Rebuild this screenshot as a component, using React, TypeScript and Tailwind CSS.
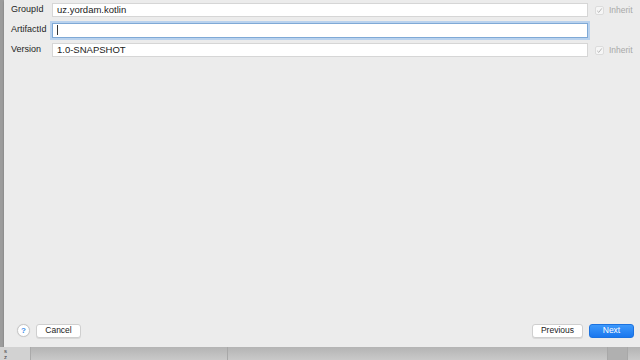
import React from "react";

const font = { fontFamily: '"Helvetica Neue", "Liberation Sans", Arial, sans-serif' };

function Row({ label, value, focused, inherit }: { label: string; value: string; focused?: boolean; inherit?: boolean }) {
  return (
    <div className="flex items-center h-[20px]">
      <div className="w-[48px] pl-[7px] text-[9px] text-[#1e1e1e]">{label}</div>
      <div
        className={
          focused
            ? "w-[536px] h-[15px] bg-white border border-[#7fa9d6] ring-2 ring-[#b9d2ee] flex items-center pl-[4px] text-[9.5px] text-[#222]"
            : "w-[536px] h-[14px] bg-white border border-[#d6d6d6] flex items-center pl-[4px] text-[9.5px] text-[#222]"
        }
      >
        {focused ? <span className="w-px h-[10px] bg-[#333]" /> : value}
      </div>
      {inherit && (
        <div className="flex items-center ml-[7px] gap-[5px] text-[8.5px] text-[#a8a8a8]">
          <span className="w-[9px] h-[9px] border border-[#dcdcdc] rounded-[2px] bg-[#f6f6f6] flex items-center justify-center">
            <svg width="7" height="7" viewBox="0 0 7 7">
              <path d="M1.2 3.8 L2.8 5.4 L5.8 1.4" fill="none" stroke="#b0b0b0" strokeWidth="0.9" />
            </svg>
          </span>
          <span>Inherit</span>
        </div>
      )}
    </div>
  );
}

export default function App() {
  return (
    <div className="w-[640px] h-[360px] bg-[#c6c6c6] relative overflow-hidden flex flex-col" style={font}>
      <div className="flex h-[348px]">
        <div className="w-[4px] bg-[#9c9c9c]" />
        <div className="flex-1 bg-[#ececec] flex flex-col shadow-[0_1px_2px_rgba(0,0,0,0.25)]">
          <div className="flex flex-col">
            <Row label="GroupId" value="uz.yordam.kotlin" inherit />
            <Row label="ArtifactId" value="" focused />
            <Row label="Version" value="1.0-SNAPSHOT" inherit />
          </div>
          <div className="flex-1" />
          <div className="flex items-center h-[15px] mb-[9px] pl-[13px] pr-[6px]">
            <div className="w-[13px] h-[13px] rounded-full bg-white border border-[#c8c8c8] flex items-center justify-center text-[8px] text-[#3d8fe8] font-bold shadow-[0_0_1px_rgba(0,0,0,0.15)]">
              ?
            </div>
            <button className="ml-[6px] w-[45px] h-[14px] bg-white border border-[#cfcfcf] rounded-[3px] text-[8.5px] text-[#222] flex items-center justify-center shadow-[0_1px_0_rgba(0,0,0,0.08)]">
              Cancel
            </button>
            <div className="flex-1" />
            <button className="w-[51px] h-[14px] bg-white border border-[#cfcfcf] rounded-[3px] text-[8.5px] text-[#222] flex items-center justify-center shadow-[0_1px_0_rgba(0,0,0,0.08)]">
              Previous
            </button>
            <button className="ml-[6px] w-[45px] h-[14px] bg-gradient-to-b from-[#3c98fb] to-[#1a77ee] border border-[#1b72e0] rounded-[3px] text-[8.5px] text-white flex items-center justify-center">
              Next
            </button>
          </div>
        </div>
      </div>
      <div className="flex-1 flex bg-gradient-to-b from-[#b4b4b4] to-[#c9c9c9]">
        <div className="w-[31px] bg-[#d2d2d2] border-r border-[#aaaaaa] text-[6px] text-[#444] leading-[6px] pl-[4px] pt-[1px]">
          s<br />z
        </div>
        <div className="w-[197px] border-r border-[#a8a8a8]" />
        <div className="w-[380px] border-r border-[#a8a8a8]" />
        <div className="w-[20px] bg-[#b0b0b0] border-r border-[#a8a8a8]" />
        <div className="flex-1" />
      </div>
    </div>
  );
}
